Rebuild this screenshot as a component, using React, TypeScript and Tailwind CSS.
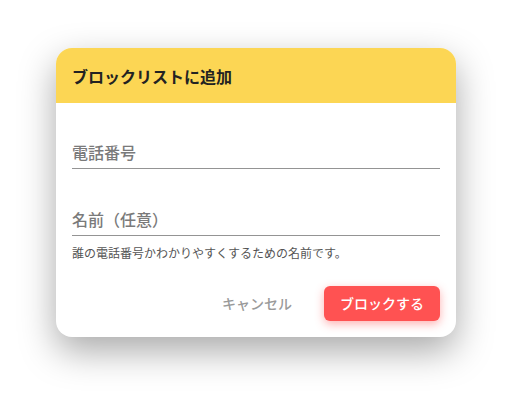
const font = { fontFamily: '"Noto Sans CJK JP", "Noto Sans", sans-serif' };

/** 入力欄(下線のみ) */
function UnderlineField({ label, className }: { label: string; className?: string }) {
  return (
    <div className={`h-[40px] flex items-end pb-1 border-b border-[#949494] ${className ?? ''}`}>
      <span className="text-[16px] leading-6 font-medium text-[#7a7a7a]">{label}</span>
    </div>
  );
}

export default function App() {
  return (
    <div className="w-[513px] h-[408px] bg-white pt-[48px] pl-[56px]" style={font}>
      <div className="w-[400px] rounded-[16px] bg-white overflow-hidden shadow-[0_14px_36px_rgba(0,0,0,0.34)]">
        {/* ヘッダー */}
        <div className="h-[55px] bg-[#fcd654] flex items-center px-4">
          <h2 className="text-[16px] font-bold text-[#222]">ブロックリストに追加</h2>
        </div>

        {/* 本文 */}
        <div className="px-4 pb-4">
          <UnderlineField label="電話番号" className="mt-[26px]" />
          <UnderlineField label="名前（任意）" className="mt-[27px]" />
          <p className="mt-[9px] text-[12px] leading-4 text-[#555]">
            誰の電話番号かわかりやすくするための名前です。
          </p>

          {/* ボタン */}
          <div className="mt-[25px] flex justify-end gap-4">
            <button className="h-[35px] px-4 text-[14px] font-medium text-[#9a9a9a]">キャンセル</button>
            <button className="h-[35px] w-[116px] rounded-[6px] bg-[#ff5252] text-[14px] font-medium text-white shadow-[0_3px_10px_rgba(255,82,82,0.45)]">
              ブロックする
            </button>
          </div>
        </div>
      </div>
    </div>
  );
}
